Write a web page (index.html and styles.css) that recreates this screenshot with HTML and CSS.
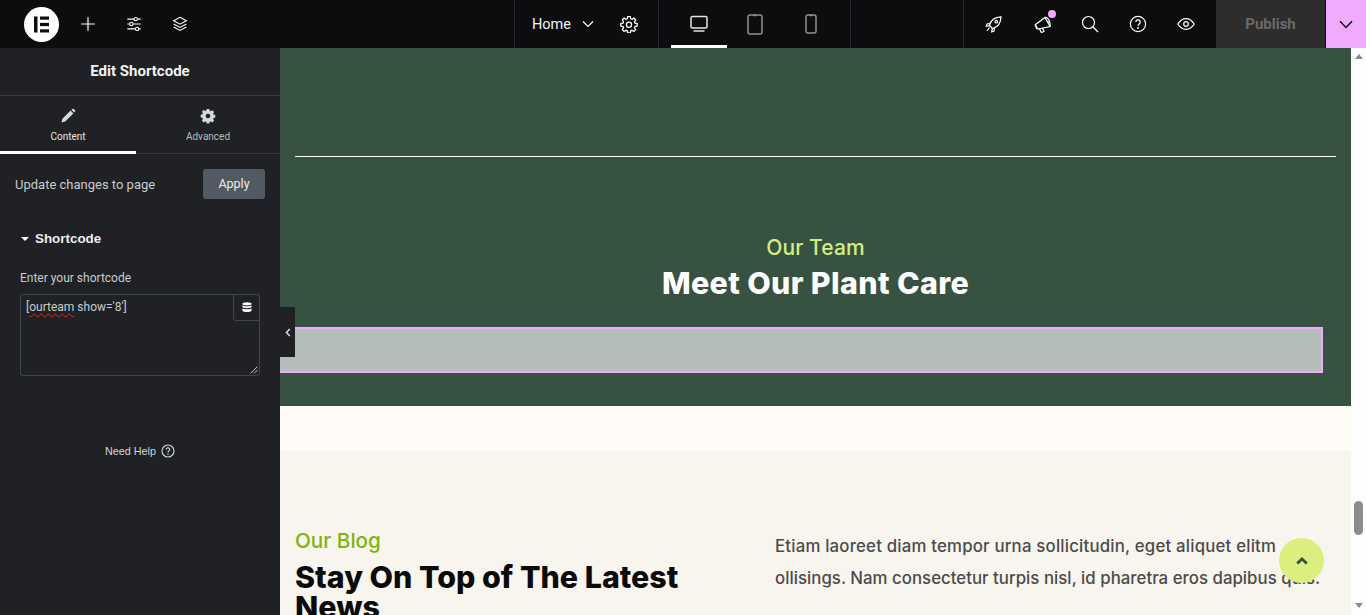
FILE: index.html
```html
<!DOCTYPE html>
<html lang="en">
<head>
<meta charset="utf-8">
<title>Edit Shortcode</title>
<link rel="stylesheet" href="styles.css">
</head>
<body>
<header class="topbar">
  <div class="tb-group tb-left">
    <div class="logo"><svg width="35" height="35" viewBox="0 0 35 35"><circle cx="17.5" cy="17.5" r="17.5" fill="#fff"/><rect x="10" y="9.5" width="3.5" height="16" fill="#0c0d0e"/><rect x="16" y="9.5" width="9" height="3.2" fill="#0c0d0e"/><rect x="16" y="15.9" width="9" height="3.2" fill="#0c0d0e"/><rect x="16" y="22.3" width="9" height="3.2" fill="#0c0d0e"/></svg></div>
    <button class="tb-btn tb-tight"><svg width="16" height="16" viewBox="0 0 16 16"><path d="M8 1.200v13.600M1.200 8h13.600" class="st"/></svg></button>
    <button class="tb-btn tb-tight"><svg width="16" height="16" viewBox="0 0 18 18"><path d="M1.500 3.500h7.500M13 3.500h3.500M1.500 9h2.500M8 9h8.500M1.500 14.500h9M14.500 14.500h2" class="st"/><circle cx="11" cy="3.500" r="1.900" class="st"/><circle cx="6" cy="9" r="1.900" class="st"/><circle cx="12.500" cy="14.500" r="1.900" class="st"/></svg></button>
    <button class="tb-btn tb-tight"><svg width="16" height="16" viewBox="0 0 18 18"><path d="M9 1.500 16.200 5.400 9 9.300 1.800 5.400Z" class="st"/><path d="M1.800 8.900 9 12.800l7.200-3.900M1.800 12.400 9 16.300l7.200-3.900" class="st"/></svg></button>
  </div>
  <div class="tb-group tb-home">
    <span class="home-label">Home</span>
    <svg class="home-chev" width="12" height="8" viewBox="0 0 12 8"><path d="M1 1.500 6 6.500l5-5" class="st"/></svg>
    <svg class="home-gear" width="18" height="18" viewBox="0 0 24 24"><path d="M10.300 2.200h3.400l.6 2.900 1.700.7 2.500-1.600 2.400 2.400-1.600 2.500.7 1.700 2.900.6v3.400l-2.900.6-.7 1.700 1.600 2.500-2.400 2.400-2.500-1.600-1.700.7-.6 2.900h-3.400l-.6-2.900-1.700-.7-2.500 1.600-2.400-2.400 1.600-2.500-.7-1.700-2.900-.6v-3.400l2.900-.6.7-1.700-1.600-2.500 2.400-2.400 2.500 1.600 1.700-.7Z" class="st-g"/><circle cx="12" cy="13" r="3.400" class="st-g"/></svg>
  </div>
  <div class="tb-group tb-devices">
    <button class="dev dev-on"><svg width="18" height="18" viewBox="0 0 18 18"><rect x="1" y="1.500" width="16" height="11.500" rx="1.500" class="st-d"/><path d="M3.500 16h11" class="st-d"/></svg></button>
    <button class="dev"><svg width="16" height="21" viewBox="0 0 16 21"><rect x="1" y="1" width="14" height="19" rx="2" class="st-m"/><path d="M6.500 1.500h3" class="st-m"/></svg></button>
    <button class="dev"><svg width="12" height="20" viewBox="0 0 12 20"><rect x="1" y="1" width="10" height="18" rx="2" class="st-m"/><path d="M4.500 1.500h3" class="st-m"/></svg></button>
  </div>
  <div class="tb-spacer"></div>
  <div class="tb-group tb-right">
    <button class="tb-btn"><svg width="18" height="18" viewBox="0 0 18 18"><path d="M6 12 4.400 10.400C5.500 6 9 2.200 16 1.800 15.800 8.800 12 12.400 7.600 13.600Z" class="st"/><circle cx="11.300" cy="6.700" r="1.300" class="st"/><path d="M4.800 8.500 2 9l-.8 2.300 3.400-.6M9.500 13.200 9 16l-2.300.8.6-3.400M4.500 12.500 2 16" class="st"/></svg></button>
    <button class="tb-btn notif"><svg width="20" height="20" viewBox="0 0 20 20"><path d="M2.200 10.800 12 3.500l5 9-12 2.500Z" class="st"/><path d="M12 3.500c1.500-.8 3.500 1.300 4.300 3.500.8 2.300 1.200 4.700.7 5.500M14.300 8.500l2.300-.8M6.500 14.800l1.800 3.700 2.700-1.100-1.600-3.300M2.200 10.800 3.800 15" class="st"/></svg><span class="dot"></span></button>
    <button class="tb-btn"><svg width="18" height="18" viewBox="0 0 18 18"><circle cx="7.500" cy="7.500" r="6" class="st"/><path d="m12 12 5 5" class="st"/></svg></button>
    <button class="tb-btn"><svg width="18" height="18" viewBox="0 0 18 18"><circle cx="9" cy="9" r="7.600" class="st"/><path d="M6.800 7a2.200 2.200 0 1 1 3.400 1.900C9.400 9.400 9 9.900 9 10.800" class="st"/><circle cx="9" cy="13" r=".9" fill="#fff"/></svg></button>
    <button class="tb-btn"><svg width="18" height="18" viewBox="0 0 18 18"><path d="M.8 9C3 5.500 5.800 3.600 9 3.600s6 1.900 8.200 5.400c-2.200 3.500-5 5.400-8.200 5.400S3 12.500.8 9Z" class="st"/><circle cx="9" cy="9" r="2.300" class="st"/></svg></button>
  </div>
  <div class="publish">Publish</div>
  <div class="publish-more"><svg width="14" height="9" viewBox="0 0 14 9"><path d="M1 1.200 7 7.500l6-6.300" class="st-k"/></svg></div>
</header>

<div class="workspace">
  <aside class="panel">
    <div class="panel-title">Edit Shortcode</div>
    <div class="tabs">
      <div class="tab tab-on">
        <svg width="16" height="16" viewBox="0 0 16 16"><path d="M1.500 14.500 2.400 10.800 10.600 2.600 13.400 5.400 5.200 13.600ZM11.400 1.800l.9-.8a1 1 0 0 1 1.400 0l1.300 1.300a1 1 0 0 1 0 1.400l-.8.900Z" fill="#d5d8dc"/></svg>
        <span>Content</span>
      </div>
      <div class="tab">
        <svg width="16" height="16" viewBox="0 0 16 16"><path fill-rule="evenodd" d="M6.700 1h2.600l.4 1.800 1 .4 1.600-1 1.800 1.800-1 1.600.4 1 1.800.4v2.600l-1.800.4-.4 1 1 1.600-1.800 1.800-1.600-1-1 .4-.4 1.800H6.700l-.4-1.800-1-.4-1.600 1-1.800-1.800 1-1.600-.4-1L.7 9.300V6.700l1.800-.4.4-1-1-1.600 1.800-1.800 1.600 1 1-.4ZM8 5.700a2.300 2.300 0 1 0 0 4.600 2.300 2.300 0 0 0 0-4.600Z" fill="#d5d8dc"/></svg>
        <span>Advanced</span>
      </div>
    </div>
    <div class="apply-row">
      <span>Update changes to page</span>
      <button class="apply">Apply</button>
    </div>
    <div class="section-head"><i class="caret"></i>Shortcode</div>
    <label class="field-label">Enter your shortcode</label>
    <div class="textarea">
      <span class="code">[<span class="misspelt">ourteam</span> show='8']</span>
      <span class="dyn"><svg width="10" height="11" viewBox="0 0 10 11"><ellipse cx="5" cy="1.800" rx="4.600" ry="1.500" fill="#fff"/><path d="M.4 3.300c1 1.400 8.200 1.400 9.200 0v1.800c-1 1.400-8.200 1.400-9.200 0ZM.4 6.300c1 1.400 8.200 1.400 9.200 0v2.500c-1 1.700-8.200 1.700-9.200 0Z" fill="#fff"/></svg></span>
      <svg class="grip" width="8" height="8" viewBox="0 0 8 8"><path d="M7.500.5l-7 7M7.500 4l-3.500 3.500" stroke="#c2c5c9" stroke-width="1" fill="none"/></svg>
    </div>
    <div class="need-help">Need Help <svg width="14" height="14" viewBox="0 0 14 14"><circle cx="7" cy="7" r="6" fill="none" stroke="#d5d8dc" stroke-width="1.100"/><path d="M5.300 5.500a1.700 1.700 0 1 1 2.700 1.400c-.7.400-1 .8-1 1.500" fill="none" stroke="#d5d8dc" stroke-width="1.100"/><circle cx="7" cy="10.200" r=".7" fill="#d5d8dc"/></svg></div>
  </aside>

  <main class="canvas">
    <button class="collapse"><svg width="6" height="9" viewBox="0 0 6 9"><path d="M4.800 1 1.500 4.500l3.300 3.500" fill="none" stroke="#d5d8dc" stroke-width="1.600"/></svg></button>
    <section class="team">
      <hr class="rule">
      <p class="eyebrow-team">Our Team</p>
      <h2 class="team-title">Meet Our Plant Care</h2>
      <div class="shortcode-box"></div>
    </section>
    <div class="cream"></div>
    <section class="blog">
      <div class="blog-head">
        <p class="eyebrow-blog">Our Blog</p>
        <h2 class="blog-title">Stay On Top of The Latest News</h2>
      </div>
      <p class="blog-text">Etiam laoreet diam tempor urna sollicitudin, eget aliquet elitm <span class="blog-text-end">ollisings. Nam consectetur turpis nisl, id pharetra eros dapibus quis.</span></p>
    </section>
    <button class="to-top"><svg width="12" height="8" viewBox="0 0 12 8"><path d="M1.200 6.500 6 2l4.800 4.500" fill="none" stroke="#38513f" stroke-width="2.800"/></svg></button>
  </main>

  <div class="scrollbar">
    <i class="arrow-up"></i>
    <div class="track"><div class="thumb"></div></div>
    <i class="arrow-down"></i>
  </div>
</div>
</body>
</html>
```
FILE: styles.css
```css
* { box-sizing: border-box; }
html, body { margin: 0; height: 100%; overflow: hidden; }
body { font-family: Roboto, sans-serif; display: flex; flex-direction: column; height: 615px; }
button { border: 0; padding: 0; background: none; font: inherit; color: inherit; display: flex; align-items: center; justify-content: center; }
.st { fill: none; stroke: #fff; stroke-width: 1.200; }
.st-g { fill: none; stroke: #fff; stroke-width: 1.700; }
.st-d { fill: none; stroke: #e4e4e4; stroke-width: 1.500; }
.st-m { fill: none; stroke: #8f9194; stroke-width: 1.500; }
.st-k { fill: none; stroke: #111; stroke-width: 1.500; }

.topbar { height: 48px; flex: none; display: flex; background: #0c0d0e; color: #fff; }
.tb-group { display: flex; align-items: center; height: 48px; }
.tb-left { width: 514px; padding-left: 24px; }
.logo { width: 35px; height: 35px; margin-right: 6px; }
.logo svg { display: block; }
.tb-btn { width: 48px; height: 48px; position: relative; }
.tb-tight { width: 46px; }
.tb-home { width: 144px; border-left: 1px solid #26282b; padding-left: 17px; }
.home-label { font-size: 14.500px; font-weight: 400; width: 39px; color: #f2f3f4; }
.home-chev { margin-left: 11px; }
.home-gear { margin-left: 26px; }
.tb-devices { width: 193px; border-left: 1px solid #26282b; border-right: 1px solid #26282b; padding-left: 12px; }
.dev { width: 56px; height: 48px; }
.dev-on { box-shadow: inset 0 -3px 0 #fff; }
.tb-spacer { width: 112px; }
.tb-right { width: 253px; border-left: 1px solid #26282b; padding-left: 6px; }
.notif svg { margin-left: 2px; }
.dot { position: absolute; top: 10px; right: 10px; width: 8px; height: 8px; border-radius: 50%; background: #f0abfc; }
.publish { width: 109px; background: #2d2d2d; color: #6a6a6a; font-size: 15px; font-weight: 700; display: flex; align-items: center; justify-content: center; margin-right: 1px; }
.publish-more { width: 40px; background: #f0abfc; display: flex; align-items: center; justify-content: center; }

.workspace { flex: 1; display: flex; min-height: 0; }
.panel { width: 280px; flex: none; background: #1f2124; color: #d5d8dc; }
.panel-title { height: 48px; border-bottom: 1px solid #34383c; display: flex; align-items: center; justify-content: center; font-size: 15px; font-weight: 700; color: #f1f2f3; padding-bottom: 2px; }
.tabs { display: flex; height: 58px; border-bottom: 1px solid #34383c; }
.tab { flex: 0 0 136px; display: flex; flex-direction: column; align-items: center; padding-top: 12px; font-size: 10px; gap: 7px; height: 58px; color: #b9bcc0; line-height: 12px; }
.tab + .tab { flex: 0 0 144px; }
.tab-on { color: #e6e8ea; border-bottom: 3px solid #fff; }
.apply-row { display: flex; align-items: center; justify-content: space-between; padding: 15px 15px 0; font-size: 13px; color: #c9ccd0; }
.apply { width: 62px; height: 30px; border-radius: 3px; background: #515962; color: #eceef0; font-size: 12.500px; padding-bottom: 2px; }
.section-head { display: flex; align-items: center; margin: 32px 0 0 21px; font-family: "Liberation Sans", sans-serif; font-weight: 700; font-size: 13.400px; color: #eceef0; height: 15px; }
.caret { width: 0; height: 0; border: 4px solid transparent; border-top: 4px solid #fff; border-bottom: 0; margin-right: 6px; }
.field-label { display: block; margin: 25px 0 0 20px; font-size: 12px; color: #c9ccd0; line-height: 15px; }
.textarea { position: relative; margin: 8px 20px 0; height: 82px; border: 1px solid #42464b; border-radius: 3px; font-size: 12px; padding: 5px 5px; color: #c9ccd0; line-height: 15px; }
.misspelt { text-decoration: underline wavy #d93025 1.300px; text-underline-offset: 2px; }
.dyn { position: absolute; top: -1px; right: -1px; width: 27px; height: 27px; border: 1px solid #42464b; border-radius: 0 3px 0 3px; display: flex; align-items: center; justify-content: center; }
.grip { position: absolute; right: 1px; bottom: 1px; }
.need-help { display: flex; align-items: center; justify-content: center; gap: 5px; margin-top: 67px; font-family: "Liberation Sans", sans-serif; font-size: 10.800px; font-weight: 400; color: #d5d8dc; height: 16px; }

.canvas { position: relative; flex: 1; overflow: hidden; background: #fffcf7; font-family: Inter, sans-serif; }
.team { height: 358px; background: #375240; padding-top: 108px; text-align: center; }
.rule { margin: 0 15px; border: 0; border-top: 1px solid #fff; height: 1px; }
.eyebrow-team { margin: 79px 0 0; font-size: 21px; letter-spacing: .1px; line-height: 24px; font-weight: 500; color: #d6ee80; }
.team-title { margin: 5px 0 0; font-size: 30.400px; letter-spacing: .37px; line-height: 36px; font-weight: 800; color: #fff; }
.shortcode-box { margin: 26px 28px 0 0; height: 46px; background: #b5bdba; border: 2px solid #f0abfc; border-left: 0; }
.cream { height: 45px; background: #fffcf7; }
.blog { height: 300px; background: #f7f5ee; display: flex; padding: 78px 15px 0; }
.blog-head { width: 480px; flex: none; }
.eyebrow-blog { margin: 0; font-size: 20.700px; line-height: 24px; font-weight: 500; color: #80b40c; }
.blog-title { margin: 9px 0 0; width: 420px; font-size: 30.400px; line-height: 30px; font-weight: 800; color: #0a0a0a; }
.blog-text { margin: 0; width: 560px; padding-top: 1px; font-size: 16.800px; letter-spacing: .2px; line-height: 32px; font-weight: 500; color: #4b4b4b; }
.blog-text-end { letter-spacing: .03px; }
.to-top { position: absolute; left: 999px; top: 490px; width: 45px; height: 45px; border-radius: 50%; background: #dcee80; }
.collapse { position: absolute; left: 0; top: 259px; width: 15px; height: 50px; background: #1f2124; }

.scrollbar { width: 15px; flex: none; background: #fdfdfd; display: flex; flex-direction: column; align-items: center; position: relative; }
.arrow-up { width: 0; height: 0; margin-top: 6px; border: 4.500px solid transparent; border-bottom: 5px solid #8a8a8a; border-top: 0; }
.track { flex: 1; width: 100%; padding-top: 442px; display: flex; justify-content: center; }
.thumb { width: 9px; height: 34px; border-radius: 5px; background: #8c8c8c; }
.arrow-down { width: 0; height: 0; margin-bottom: 7px; border: 4.500px solid transparent; border-top: 5px solid #8a8a8a; border-bottom: 0; }
```
